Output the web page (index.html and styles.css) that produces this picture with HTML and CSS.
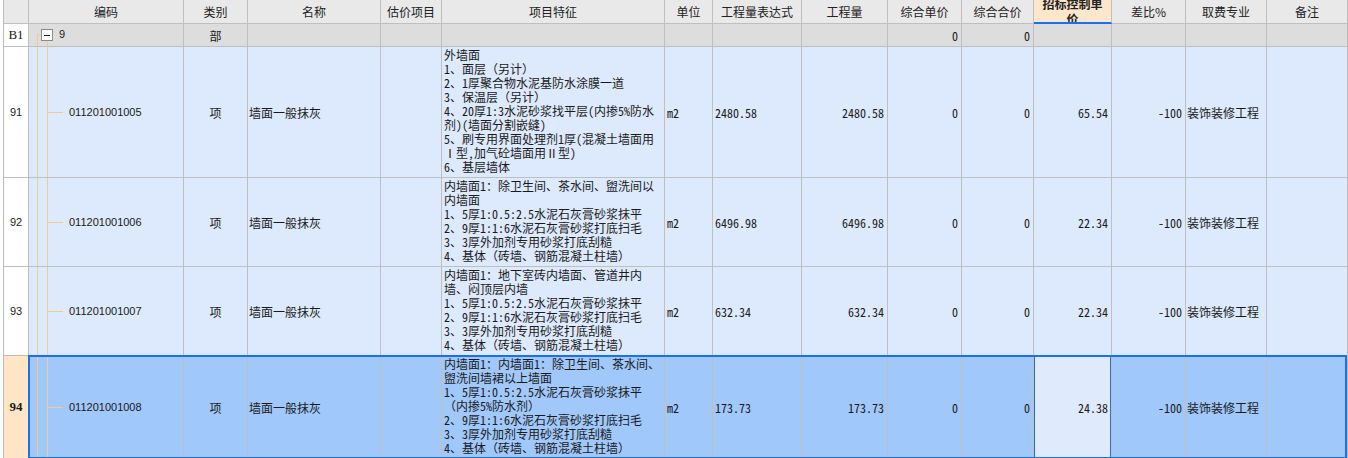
FILE: index.html
```html
<!DOCTYPE html>
<html lang="zh-CN">
<head>
<meta charset="utf-8">
<title>清单</title>
<link rel="stylesheet" href="styles.css">
</head>
<body>
<div class="grid">
  <div class="row head">
    <div class="c"></div>
    <div class="c">编码</div>
    <div class="c">类别</div>
    <div class="c">名称</div>
    <div class="c">估价项目</div>
    <div class="c">项目特征</div>
    <div class="c">单位</div>
    <div class="c">工程量表达式</div>
    <div class="c">工程量</div>
    <div class="c">综合单价</div>
    <div class="c">综合合价</div>
    <div class="c zb">招标控制单<br>价</div>
    <div class="c">差比%</div>
    <div class="c">取费专业</div>
    <div class="c">备注</div>
  </div>

  <div class="row part">
    <div class="c num b1">B1</div>
    <div class="c code tree-part"><span class="fold"></span><span class="pnum">9</span></div>
    <div class="c mid">部</div>
    <div class="c"></div>
    <div class="c"></div>
    <div class="c"></div>
    <div class="c"></div>
    <div class="c"></div>
    <div class="c"></div>
    <div class="c val">0</div>
    <div class="c val">0</div>
    <div class="c"></div>
    <div class="c"></div>
    <div class="c"></div>
    <div class="c"></div>
  </div>

  <div class="row item">
    <div class="c num">91</div>
    <div class="c code tree">011201001005</div>
    <div class="c mid">项</div>
    <div class="c name">墙面一般抹灰</div>
    <div class="c"></div>
    <div class="c feat">外墙面<br>1、面层（另计）<br>2、1厚聚合物水泥基防水涂膜一道<br>3、保温层（另计）<br>4、20厚1:3水泥砂浆找平层(内掺5%防水<br>剂)(墙面分割嵌缝)<br>5、刷专用界面处理剂1厚(混凝土墙面用<br> Ⅰ型,加气砼墙面用Ⅱ型)<br>6、基层墙体</div>
    <div class="c mono">m2</div>
    <div class="c mono">2480.58</div>
    <div class="c val">2480.58</div>
    <div class="c val">0</div>
    <div class="c val">0</div>
    <div class="c val">65.54</div>
    <div class="c val">-100</div>
    <div class="c name fee">装饰装修工程</div>
    <div class="c"></div>
  </div>

  <div class="row item">
    <div class="c num">92</div>
    <div class="c code tree">011201001006</div>
    <div class="c mid">项</div>
    <div class="c name">墙面一般抹灰</div>
    <div class="c"></div>
    <div class="c feat">内墙面1：除卫生间、茶水间、盥洗间以<br>内墙面<br>1、5厚1:0.5:2.5水泥石灰膏砂浆抹平<br>2、9厚1:1:6水泥石灰膏砂浆打底扫毛<br>3、3厚外加剂专用砂浆打底刮糙<br>4、基体（砖墙、钢筋混凝土柱墙）</div>
    <div class="c mono">m2</div>
    <div class="c mono">6496.98</div>
    <div class="c val">6496.98</div>
    <div class="c val">0</div>
    <div class="c val">0</div>
    <div class="c val">22.34</div>
    <div class="c val">-100</div>
    <div class="c name fee">装饰装修工程</div>
    <div class="c"></div>
  </div>

  <div class="row item">
    <div class="c num">93</div>
    <div class="c code tree">011201001007</div>
    <div class="c mid">项</div>
    <div class="c name">墙面一般抹灰</div>
    <div class="c"></div>
    <div class="c feat">内墙面1：地下室砖内墙面、管道井内<br>墙、闷顶层内墙<br>1、5厚1:0.5:2.5水泥石灰膏砂浆抹平<br>2、9厚1:1:6水泥石灰膏砂浆打底扫毛<br>3、3厚外加剂专用砂浆打底刮糙<br>4、基体（砖墙、钢筋混凝土柱墙）</div>
    <div class="c mono">m2</div>
    <div class="c mono">632.34</div>
    <div class="c val">632.34</div>
    <div class="c val">0</div>
    <div class="c val">0</div>
    <div class="c val">22.34</div>
    <div class="c val">-100</div>
    <div class="c name fee">装饰装修工程</div>
    <div class="c"></div>
  </div>

  <div class="row item sel">
    <div class="c num cur">94</div>
    <div class="c code tree">011201001008</div>
    <div class="c mid">项</div>
    <div class="c name">墙面一般抹灰</div>
    <div class="c"></div>
    <div class="c feat">内墙面1：内墙面1：除卫生间、茶水间、<br>盥洗间墙裙以上墙面<br>1、5厚1:0.5:2.5水泥石灰膏砂浆抹平<br>（内掺5%防水剂）<br>2、9厚1:1:6水泥石灰膏砂浆打底扫毛<br>3、3厚外加剂专用砂浆打底刮糙<br>4、基体（砖墙、钢筋混凝土柱墙）</div>
    <div class="c mono">m2</div>
    <div class="c mono">173.73</div>
    <div class="c val">173.73</div>
    <div class="c val">0</div>
    <div class="c val">0</div>
    <div class="c val focus">24.38</div>
    <div class="c val">-100</div>
    <div class="c name fee">装饰装修工程</div>
    <div class="c"></div>
  </div>
</div>
</body>
</html>
```

FILE: styles.css
```css
html, body {
  margin: 0;
  padding: 0;
  overflow: hidden;
  background: #ffffff;
  height: 458px;
}

body {
  font-family: "Noto Sans CJK SC", "Noto Sans", sans-serif;
  font-size: 12px;
  color: #1a1a1a;
}

.grid {
  margin-left: 3px;
  border-left: 1px solid #bdbdbd;
  width: 1344px;
}

.row {
  display: grid;
  grid-template-columns: 25px 155px 64px 133px 61px 223px 48px 89px 86px 74px 72px 78px 74px 81px 81px;
}

.c {
  box-sizing: border-box;
  border-right: 1px solid #bfbfbf;
  border-bottom: 1px solid #bfbfbf;
  display: flex;
  align-items: center;
  overflow: hidden;
  white-space: nowrap;
  min-width: 0;
}

/* header */
.head {
  height: 24px;
  background: #e9e9e9;
}
.head .c {
  justify-content: center;
  color: #222;
  line-height: 14px;
}
.head .zb {
  background: #fde6c9;
  border-bottom: 2px solid #1b6ff2;
  font-weight: bold;
  line-height: 15px;
  text-align: center;
  display: block;
  padding-top: 0;
  margin-top: 0;
}
.head .zb {
  display: flex;
  flex-direction: column;
  justify-content: center;
  white-space: normal;
}

/* part row */
.part {
  height: 23px;
  background: #dddddd;
}
.num {
  justify-content: center;
  background: #ffffff;
  font-family: "Liberation Sans", Arial, sans-serif;
  font-size: 11px;
}
.num.b1 {
  font-family: "Liberation Serif", serif;
  font-size: 13px;
}
.num.cur {
  background: #fde5c6;
  font-weight: bold;
  font-family: "Liberation Serif", serif;
  font-size: 13px;
}
.mid {
  justify-content: center;
}
.val {
  justify-content: flex-end;
  padding-right: 3px;
  font-family: "Noto Sans Mono CJK SC", "DejaVu Sans Mono", monospace;
  font-size: 12px;
}
.mono {
  padding-left: 2px;
  font-family: "Noto Sans Mono CJK SC", "DejaVu Sans Mono", monospace;
  font-size: 12px;
}

.tree-part {
  padding-left: 12px;
  background-image:
    linear-gradient(#f8c98b, #f8c98b),
    linear-gradient(#f8c98b, #f8c98b),
    linear-gradient(#f8c98b, #f8c98b);
  background-repeat: no-repeat;
  background-size: 1px 100%, 4px 1px, 1px 100%;
  background-position: 8px 10px, 8px 10px, 18px 16px;
}
.fold {
  box-sizing: border-box;
  width: 12px;
  height: 12px;
  border: 1px solid #8a8a8a;
  background: #ffffff;
  position: relative;
  margin-top: -1px;
}
.fold::before {
  content: "";
  position: absolute;
  left: 2px;
  right: 2px;
  top: 5px;
  height: 1px;
  background: #222;
}
.pnum {
  margin-left: 6px;
  font-family: "Liberation Sans", Arial, sans-serif;
  font-size: 11px;
  margin-top: -2px;
}

/* item rows */
.item {
  background: #dde9fc;
}
.code {
  font-family: "Liberation Sans", Arial, sans-serif;
  font-size: 11px;
}
.tree {
  padding-left: 40px;
  background-image:
    linear-gradient(#f8c98b, #f8c98b),
    linear-gradient(#f8c98b, #f8c98b),
    linear-gradient(#f8c98b, #f8c98b);
  background-repeat: no-repeat;
  background-size: 1px 100%, 1px 100%, 16px 1px;
  background-position: 8px 0, 18px 0, 18px 50%;
}
.name {
  padding-left: 1px;
}
.fee {
  padding-left: 1px;
}
.feat {
  display: block;
  padding: 1px 2px 3px 2px;
  line-height: 14px;
  font-family: "Noto Sans Mono CJK SC", "Noto Sans CJK SC", monospace;
  font-size: 12px;
}

/* selection */
.sel {
  background: #a0c8fa;
  position: relative;
}
.sel::after {
  content: "";
  position: absolute;
  top: -1px;
  left: 24px;
  right: 1px;
  bottom: 0;
  border: 2px solid #1b6ff2;
  pointer-events: none;
}
.focus {
  background: #dfeafc;
  position: relative;
}
.focus::after {
  content: "";
  position: absolute;
  top: 0;
  bottom: 0;
  left: -1px;
  right: -1px;
  border-left: 2px solid #1b6ff2;
  border-right: 2px solid #1b6ff2;
}
```
